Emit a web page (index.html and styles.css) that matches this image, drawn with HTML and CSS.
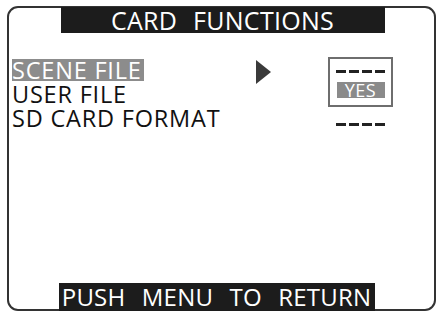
FILE: index.html
```html
<!DOCTYPE html>
<html>
<head>
<meta charset="utf-8">
<link rel="stylesheet" href="styles.css">
</head>
<body>
<div class="screen">
  <div class="title">CARD FUNCTIONS</div>
  <div class="menu">
    <div class="labels">
      <div class="item selected">SCENE FILE</div>
      <div class="item">USER FILE</div>
      <div class="item">SD CARD FORMAT</div>
    </div>
    <div class="arrow-col">
      <svg class="arrow" width="15" height="24" viewBox="0 0 15 24"><polygon points="0,0 15,12 0,24" fill="#3a3a3a"/></svg>
    </div>
    <div class="values">
      <div class="box">
        <div class="val"><span class="dashes"><i></i><i></i><i></i><i></i></span></div>
        <div class="val"><span class="yes">YES</span></div>
      </div>
      <div class="val plain"><span class="dashes"><i></i><i></i><i></i><i></i></span></div>
    </div>
  </div>
  <div class="spacer"></div>
  <div class="footer">PUSH MENU TO RETURN</div>
</div>
</body>
</html>
```
FILE: styles.css
```css
html, body {
  margin: 0;
  padding: 0;
  background: #fff;
}
body {
  width: 437px;
  height: 312px;
  overflow: hidden;
  font-family: "Open Sans", "Noto Sans", sans-serif;
}
.screen {
  box-sizing: border-box;
  margin: 6px 0 0 7px;
  width: 429px;
  height: 305px;
  border: 2px solid #333;
  border-radius: 11px;
  display: flex;
  flex-direction: column;
}
.title {
  align-self: center;
  margin-left: 2px;
  width: 324px;
  height: 26px;
  margin-top: -1px;
  background: #1c1c1c;
  color: #fff;
  font-size: 25px;
  line-height: 26px;
  text-align: center;
  word-spacing: 9px;
  letter-spacing: 0.3px;
}
.menu {
  margin-top: 25px;
  display: flex;
  align-items: flex-start;
}
.labels {
  margin-left: 3px;
  width: 244px;
  display: flex;
  flex-direction: column;
}
.item {
  height: 24px;
  line-height: 24px;
  font-size: 23.5px;
  color: #111;
  align-self: flex-start;
  letter-spacing: 0.8px;
}
.item.selected {
  background: #8c8c8c;
  color: #fff;
  height: 22px;
  line-height: 23px;
  margin-top: 1px;
  margin-bottom: 1px;
  padding-right: 2px;
}
.arrow-col {
  width: 72px;
  padding-top: 2px;
}
.arrow {
  display: block;
}
.values {
  margin-top: -1px;
  display: flex;
  flex-direction: column;
  align-items: center;
  width: 65px;
}
.box {
  box-sizing: border-box;
  width: 65px;
  height: 50px;
  border: 2px solid #6e6e6e;
  display: flex;
  flex-direction: column;
  align-items: center;
  padding-top: 11px;
  gap: 9px;
}
.val {
  display: flex;
  justify-content: center;
}
.val.plain {
  margin-top: 16px;
}
.dashes {
  display: flex;
  gap: 3px;
}
.dashes i {
  display: block;
  width: 10px;
  height: 3px;
  background: #222;
}
.yes {
  display: block;
  width: 48px;
  height: 16px;
  background: #8a8a8a;
  color: #fff;
  font-size: 18px;
  line-height: 16px;
  text-align: center;
  letter-spacing: 0.5px;
}
.spacer {
  flex: 1;
}
.footer {
  align-self: center;
  margin-left: -10px;
  width: 316px;
  height: 28px;
  margin-bottom: -2px;
  background: #1c1c1c;
  color: #fff;
  font-size: 24px;
  line-height: 28px;
  text-align: center;
  word-spacing: 10px;
  letter-spacing: 0.2px;
  white-space: nowrap;
}
```
